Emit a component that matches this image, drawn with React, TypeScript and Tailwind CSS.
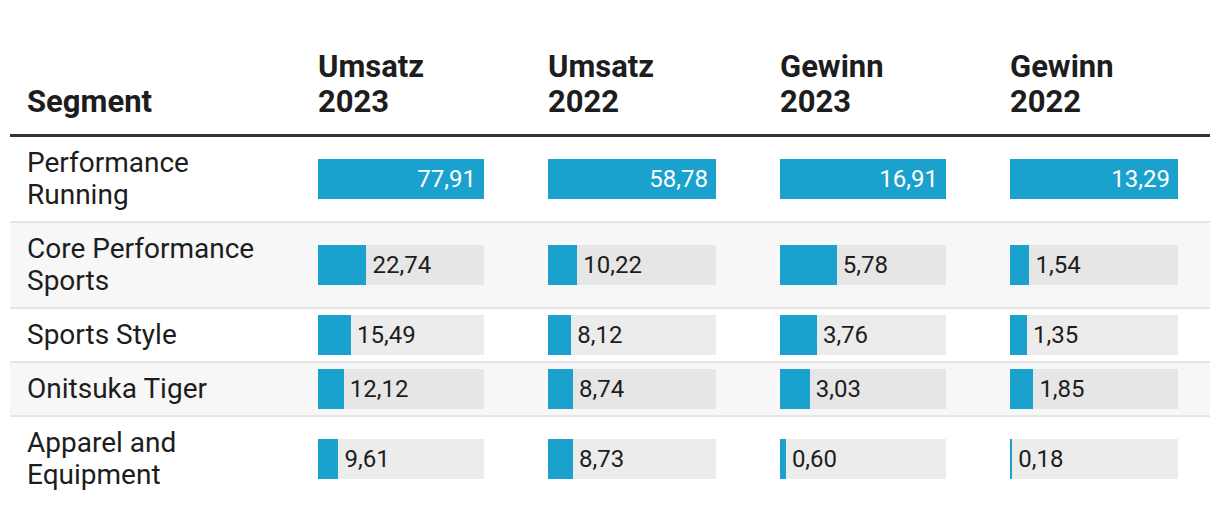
import React from "react"

const cols = [
  { title: "Umsatz", year: "2023", w: "w-[166px]" },
  { title: "Umsatz", year: "2022", w: "w-[168px]" },
  { title: "Gewinn", year: "2023", w: "w-[166px]" },
  { title: "Gewinn", year: "2022", w: "w-[168px]" },
]

const rows = [
  { seg: "Performance Running", vals: [77.91, 58.78, 16.91, 13.29] },
  { seg: "Core Performance Sports", vals: [22.74, 10.22, 5.78, 1.54] },
  { seg: "Sports Style", vals: [15.49, 8.12, 3.76, 1.35] },
  { seg: "Onitsuka Tiger", vals: [12.12, 8.74, 3.03, 1.85] },
  { seg: "Apparel and Equipment", vals: [9.61, 8.73, 0.6, 0.18] },
]

const maxes = [0, 1, 2, 3].map((c) => Math.max(...rows.map((r) => r.vals[c])))

const fmt = (v: number) => v.toFixed(2).replace(".", ",")

const grid = "grid grid-cols-[300px_230px_232px_230px_1fr]"

const Bar = ({ value, max, track }: { value: number; max: number; track: string }) => {
  const full = value === max
  return (
    <div className={`relative flex h-10 items-center text-[24px] ${track}`}>
      <div className="h-full bg-[#1ba1ce]" style={{ width: `${(value / max) * 100}%` }} />
      {full ? (
        <span className="absolute right-2 text-white">{fmt(value)}</span>
      ) : (
        <span className="ml-[6px] text-[#1d1d1d]">{fmt(value)}</span>
      )}
    </div>
  )
}

export default function App() {
  return (
    <div className="h-[512px] w-[1220px] bg-white px-[10px] pt-[49px] font-['Roboto',sans-serif] text-[#1d1d1d]">
      <div className={`${grid} items-end border-b-[3px] border-[#333333] pb-[15px] text-[31px] font-bold leading-[35px]`}>
        <div className="pl-[17px]">Segment</div>
        {cols.map((c, i) => (
          <div key={i} className="pl-2">
            {c.title}
            <br />
            {c.year}
          </div>
        ))}
      </div>
      {rows.map((r, ri) => {
        const gray = ri % 2 === 1
        const last = ri === rows.length - 1
        return (
          <div
            key={ri}
            className={`${grid} items-center text-[28px] leading-[32px] ${last ? "" : "border-b-2 border-[#e6e6e6]"} ${gray ? "bg-[#f7f7f7]" : "bg-white"}`}
          >
            <div className="w-[262px] py-[10px] pl-[17px]">{r.seg}</div>
            {r.vals.map((v, ci) => (
              <div key={ci} className="py-[6px] pl-2">
                <div className={cols[ci].w}>
                  <Bar value={v} max={maxes[ci]} track={gray ? "bg-[#e6e6e6]" : "bg-[#ececec]"} />
                </div>
              </div>
            ))}
          </div>
        )
      })}
    </div>
  )
}
